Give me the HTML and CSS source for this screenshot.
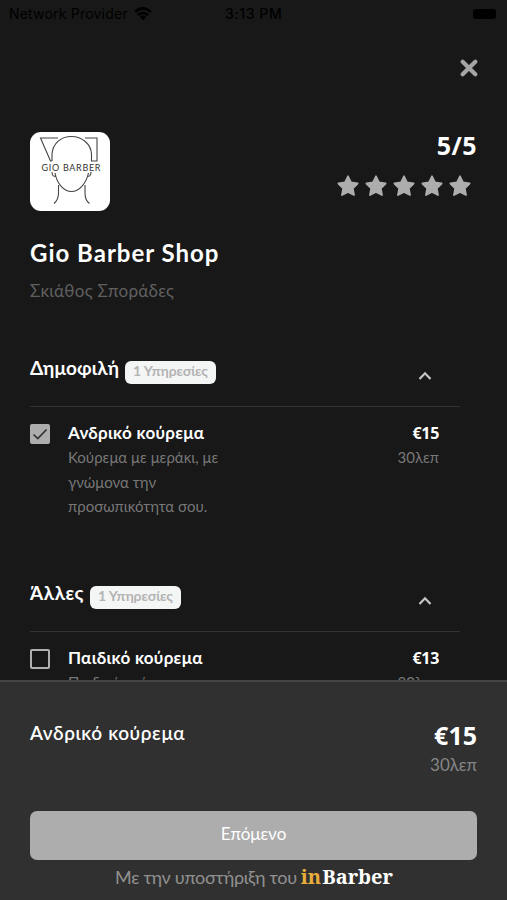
FILE: index.html
```html
<!DOCTYPE html>
<html lang="el">
<head>
<meta charset="utf-8">
<title>Gio Barber Shop</title>
<link rel="stylesheet" href="styles.css">
</head>
<body>
<div class="screen">
  <div class="statusbar">
    <span class="carrier">Network Provider</span>
    <svg class="wifi" viewBox="0 0 18 14"><path d="M1.300 5Q9-2.200 16.700 5M4 8.100Q9 3.500 14 8.100" fill="none" stroke="#000" stroke-width="2.600"/><path d="M5.900 9.900Q9 7.300 12.100 9.900L9 13.300Z"/></svg>
    <span class="clock">3:13 PM</span>
    <span class="battery"></span>
  </div>
  <main class="content">
    <div class="closebar">
      <svg class="close" viewBox="0 0 18 18"><path d="M2.700 2.700L15.300 15.300M15.300 2.700L2.700 15.300" stroke="#a5a5a5" stroke-width="4.200" stroke-linecap="round"/></svg>
    </div>
    <div class="shop">
      <svg class="logo" viewBox="0 0 80 79">
        <g fill="none" stroke="#444" stroke-width="1.100">
          <path d="M22 29V22C23 11 31 4.500 41.500 4.500S61 12 61.500 22V29H67V6H55M28 6H10.500L20.500 29H22"/>
          <path d="M25 41C27 52 34 59.500 41.500 59.500S56 52 58.500 41M22 40C22 43 23.500 45 25.500 44M61 40C61 43 59.500 45 57.500 44M28.500 53V61C28.500 66 27 69 24 71.500M55 53V61C55 66 56 69 59.500 71.500"/>
        </g>
        <text class="logo-text" x="11.500" y="39" textLength="59">GIO BARBER</text>
      </svg>
      <div class="rating">
        <div class="score">5/5</div>
        <div class="stars">
          <svg viewBox="0 0 22 22"><path d="M11 1.300L14 7.500L20.600 8.500L15.800 13.300L17 20L11 17L5 20L6.200 13.300L1.400 8.500L8 7.500Z"/></svg>
          <svg viewBox="0 0 22 22"><path d="M11 1.300L14 7.500L20.600 8.500L15.800 13.300L17 20L11 17L5 20L6.200 13.300L1.400 8.500L8 7.500Z"/></svg>
          <svg viewBox="0 0 22 22"><path d="M11 1.300L14 7.500L20.600 8.500L15.800 13.300L17 20L11 17L5 20L6.200 13.300L1.400 8.500L8 7.500Z"/></svg>
          <svg viewBox="0 0 22 22"><path d="M11 1.300L14 7.500L20.600 8.500L15.800 13.300L17 20L11 17L5 20L6.200 13.300L1.400 8.500L8 7.500Z"/></svg>
          <svg viewBox="0 0 22 22"><path d="M11 1.300L14 7.500L20.600 8.500L15.800 13.300L17 20L11 17L5 20L6.200 13.300L1.400 8.500L8 7.500Z"/></svg>
        </div>
      </div>
    </div>
    <h1 class="name">Gio Barber Shop</h1>
    <p class="place">Σκιάθος Σποράδες</p>

    <section class="group">
      <header class="group-head">
        <h2 class="popular">Δημοφιλή</h2><span class="badge">1 Υπηρεσίες</span>
        <svg class="chevron" viewBox="0 0 14 10"><path d="M1.500 8L7 2.300L12.500 8" fill="none" stroke="#c4c4c4" stroke-width="2.300"/></svg>
      </header>
      <div class="item">
        <span class="box checked"><svg viewBox="0 0 20 20"><path d="M3.500 10.500L7.800 14.600L16.500 5.500" fill="none" stroke="#333" stroke-width="1.700"/></svg></span>
        <div class="info">
          <h3>Ανδρικό κούρεμα</h3>
          <p>Κούρεμα με μεράκι, με<br>γνώμονα την<br>προσωπικότητα σου.</p>
        </div>
        <div class="cost"><strong>€15</strong><span>30λεπ</span></div>
      </div>
    </section>

    <section class="group">
      <header class="group-head">
        <h2 class="others">Άλλες</h2><span class="badge">1 Υπηρεσίες</span>
        <svg class="chevron" viewBox="0 0 14 10"><path d="M1.500 8L7 2.300L12.500 8" fill="none" stroke="#c4c4c4" stroke-width="2.300"/></svg>
      </header>
      <div class="item">
        <span class="box"></span>
        <div class="info">
          <h3>Παιδικό κούρεμα</h3>
          <p>Παιδικό κούρεμα</p>
        </div>
        <div class="cost"><strong>€13</strong><span>30λεπ</span></div>
      </div>
    </section>
  </main>
  <footer class="summary">
    <div class="chosen">
      <div class="chosen-name">Ανδρικό κούρεμα</div>
      <div class="total"><strong>€15</strong><span>30λεπ</span></div>
    </div>
    <button class="next">Επόμενο</button>
    <div class="powered"><span class="by">Με την υποστήριξη του</span><span class="brand"><i>in</i>Barber</span></div>
  </footer>
</div>
</body>
</html>
```
FILE: styles.css
```css
* { box-sizing: border-box; }
body { margin: 0; background: #181818; color: #fff; font-family: Lato, "Open Sans", sans-serif; }
h1, h2, h3, p { margin: 0; }
svg { display: block; flex: none; }
.screen { width: 507px; height: 900px; display: flex; flex-direction: column; overflow: hidden; white-space: nowrap; }
.statusbar { height: 27px; flex: none; display: grid; grid-template-columns: 124px 101px 1fr auto; align-items: center; padding: 0 11px 0 9px; color: #000; font: 14px/27px Inter, sans-serif; }
.carrier { letter-spacing: .2px; }
.wifi { width: 18px; height: 14px; margin-left: 1px; }
.clock { font-weight: 500; margin-left: -9px; letter-spacing: .6px; }
.battery { width: 23px; height: 10px; border-radius: 3px; background: #000; }
.content { flex: 1; min-height: 0; overflow: hidden; padding: 0 30px; }
.closebar { height: 105px; display: flex; justify-content: flex-end; padding-top: 32px; }
.close { width: 18px; height: 18px; margin-right: -1px; }
.shop { display: flex; justify-content: space-between; height: 80px; }
.logo { width: 80px; height: 79px; border-radius: 11px; background: #fff; }
.logo-text { font: 9px Lato, sans-serif; fill: #333; }
.score { font: bold 25px/30px "Noto Sans", sans-serif; text-align: right; margin-top: -2px; letter-spacing: .4px; }
.stars { display: flex; gap: 6px; margin: 15px 6px 0 0; }
.stars svg { width: 22px; height: 22px; fill: #adadad; stroke: #adadad; stroke-width: 1.800; stroke-linejoin: round; }
.name { font-size: 24px; line-height: 32px; margin-top: 25px; letter-spacing: 1px; }
.place { font-size: 17px; line-height: 24px; margin-top: 10px; color: #606060; letter-spacing: .28px; }
.group { width: 430px; height: 225px; }
.place + .group { margin-top: 50px; }
.group-head { height: 54px; display: flex; border-bottom: 1px solid #333; }
h2 { font-size: 19px; line-height: 30px; letter-spacing: .1px; }
.others { letter-spacing: .5px; }
.badge { height: 23px; margin: 8px 0 0 6px; padding: 0 8px; border-radius: 6px; background: #f4f5f5; color: #b3b3b3; font-weight: bold; font-size: 14px; line-height: 20px; letter-spacing: -.08px; }
.chevron { width: 14px; height: 10px; margin: 18px 28px 0 auto; }
.item { display: flex; padding-top: 14px; }
.box { width: 20px; height: 20px; margin-top: 3px; border: 2px solid #b0b0b0; border-radius: 2px; }
.box.checked { border: 0; background: #adadad; }
.info { margin-left: 18px; }
h3 { font-size: 17px; line-height: 24px; letter-spacing: .28px; }
.info p { font-size: 15px; line-height: 24.500px; color: #777; }
.cost { margin: 0 21px 0 auto; text-align: right; }
.cost strong { display: block; font: bold 16px/24px "Noto Sans", sans-serif; letter-spacing: -.3px; }
.cost span { display: block; font-size: 15px; line-height: 25px; color: #777; }
.summary { height: 220px; flex: none; padding: 36px 30px 0; background: #303030; border-top: 2px solid #444; }
.chosen { height: 93px; display: flex; justify-content: space-between; }
.chosen-name { font-size: 19px; line-height: 30px; font-weight: 600; letter-spacing: .6px; }
.total { text-align: right; }
.total strong { display: block; font: bold 25px/34px "Noto Sans", sans-serif; }
.total span { display: block; font-size: 17px; line-height: 26px; color: #858585; }
.next { display: block; width: 447px; height: 49px; padding: 0 0 4px; border: 0; border-radius: 7px; background: #adadad; color: #fff; font: 17px Lato, sans-serif; }
.powered { display: flex; align-items: baseline; margin: 2px 0 0 85px; line-height: 30px; }
.by { font-size: 18px; color: #909090; letter-spacing: -.28px; }
.brand { margin-left: 4px; font-family: "Noto Serif", "DejaVu Serif", serif; font-weight: bold; font-size: 20px; }
.brand i { font-style: normal; color: #e7ad3b; margin-right: 1px; }
```
